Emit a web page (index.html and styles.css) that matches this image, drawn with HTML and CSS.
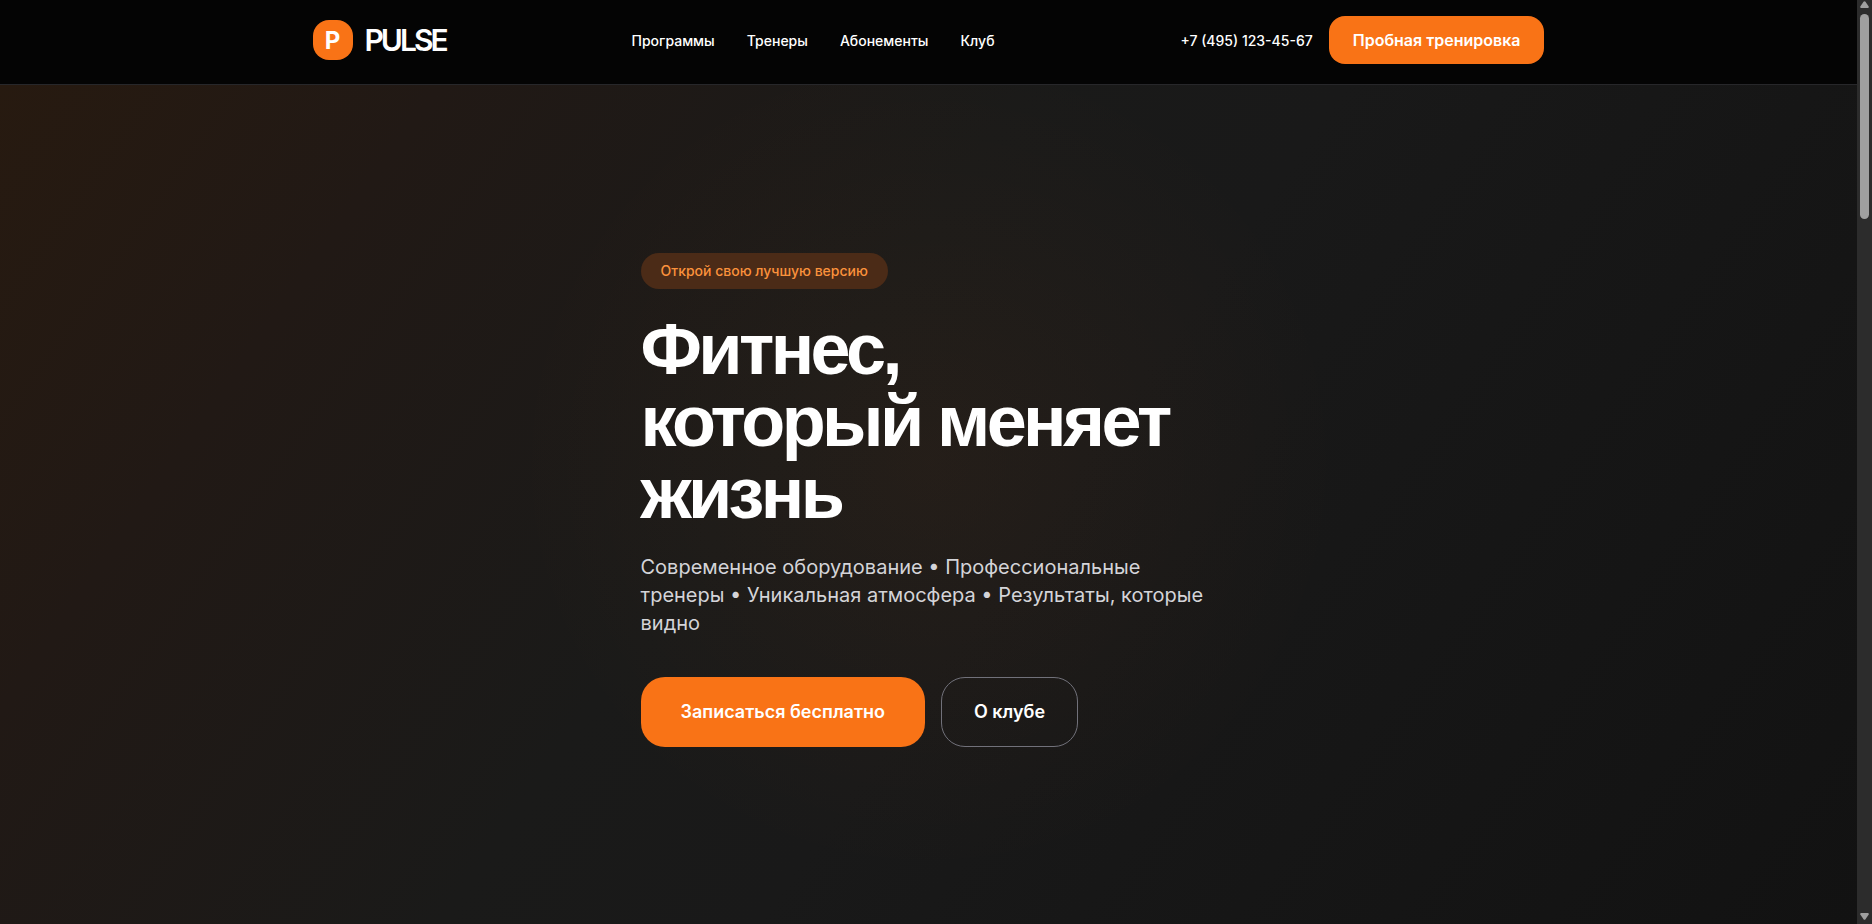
FILE: index.html
```html
<!DOCTYPE html>
<html lang="ru">
<head>
    <meta charset="UTF-8">
    <meta name="viewport" content="width=device-width, initial-scale=1.0">
    <title>PULSE</title>
    <link rel="stylesheet" href="styles.css">
</head>
<body>
    <div class="page">
        <header class="header">
            <div class="container">
                <a href="#" class="logo">
                    <span class="logo-icon">P</span>
                    <span class="logo-text">PULSE</span>
                </a>
                <nav class="nav">
                    <a href="#programs">Программы</a>
                    <a href="#trainers">Тренеры</a>
                    <a href="#prices">Абонементы</a>
                    <a href="#club">Клуб</a>
                </nav>
                <div class="contacts">
                    <a href="tel:+74951234567" class="phone">+7 (495) 123-45-67</a>
                    <button type="button" class="btn-trial">Пробная тренировка</button>
                </div>
            </div>
        </header>

        <main class="hero">
            <div class="hero-content">
                <span class="badge">Открой свою лучшую версию</span>
                <h1>Фитнес,<br>который меняет<br>жизнь</h1>
                <p>Современное оборудование • Профессиональные тренеры • Уникальная атмосфера • Результаты, которые видно</p>
                <div class="hero-buttons">
                    <button type="button" class="btn-primary">Записаться бесплатно</button>
                    <button type="button" class="btn-outline">О клубе</button>
                </div>
            </div>
        </main>
    </div>

    <!-- Scrollbar -->
    <div class="scrollbar" aria-hidden="true">
        <svg width="9" height="7" viewBox="0 0 9 7"><path d="M3.5 0.8Q4.5 -0.4 5.5 0.8L8.7 5.4Q9 7 8 7H1Q0 7 0.3 5.4Z"/></svg>
        <div class="track"><div class="thumb"></div></div>
        <svg width="9" height="7" viewBox="0 0 9 7"><path d="M3.5 6.2Q4.5 7.4 5.5 6.2L8.7 1.6Q9 0 8 0H1Q0 0 0.3 1.6Z"/></svg>
    </div>
</body>
</html>
```

FILE: styles.css
```css
* {
    box-sizing: border-box;
}

body {
    font-family: Inter, "Liberation Sans", sans-serif;
    background-color: #09090b;
    color: #FFFFFF;
    margin: 0;
    display: flex;
    height: 100vh;
    overflow: hidden;
}

a {
    color: inherit;
    text-decoration: none;
}

button {
    font-family: inherit;
    color: #FFFFFF;
    border: none;
    cursor: pointer;
}

.page {
    flex: 1;
    display: flex;
    flex-direction: column;
}

.header {
    background-color: #040404;
    border-bottom: 1px solid #27272a;
    padding: 16px 24px 20px;
}

.container {
    max-width: 1232px;
    margin: 0 auto;
    display: flex;
    align-items: center;
    justify-content: space-between;
}

.logo {
    display: flex;
    align-items: center;
    gap: 12px;
}

.logo-icon {
    display: flex;
    align-items: center;
    justify-content: center;
    width: 40px;
    height: 40px;
    border-radius: 16px;
    background-color: #f97316;
    font-size: 24px;
    font-weight: 700;
}

.logo-text {
    font-size: 30px;
    font-weight: 600;
    letter-spacing: -3px;
}

.nav {
    display: flex;
    gap: 32px;
    font-size: 14px;
    font-weight: 500;
}

.contacts {
    display: flex;
    align-items: center;
    gap: 16px;
}

.phone {
    font-size: 14px;
    font-weight: 500;
}

.btn-trial {
    height: 48px;
    padding: 0 24px;
    border-radius: 16px;
    background-color: #f97316;
    font-size: 16px;
    font-weight: 600;
}

.hero {
    flex: 1;
    display: flex;
    align-items: center;
    justify-content: center;
    padding-bottom: 10px;
    background:
        radial-gradient(circle at 50% 45%, rgba(249, 115, 22, 0.05), transparent 40%),
        linear-gradient(125deg, #271a10 0%, #211915 18%, #1a1a19 42%, #191919 55%, #121212 100%);
}

.hero-content {
    width: 576px;
}

.badge {
    display: inline-block;
    padding: 8px 20px;
    border-radius: 18px;
    background-color: #4b2b17;
    color: #fb923c;
    font-size: 14px;
    line-height: 20px;
    font-weight: 500;
}

h1 {
    margin: 24px 0;
    font-family: "Liberation Sans", Arial, sans-serif;
    font-size: 72px;
    line-height: 1;
    font-weight: 700;
    letter-spacing: -0.05em;
}

.hero p {
    margin: 0 0 40px;
    color: #d4d4d8;
    font-size: 20px;
    line-height: 28px;
}

.hero-buttons {
    display: flex;
    gap: 16px;
}

.btn-primary,
.btn-outline {
    height: 70px;
    border-radius: 24px;
    font-size: 18px;
    font-weight: 600;
}

.btn-primary {
    padding: 0 40px;
    background-color: #f97316;
}

.btn-outline {
    padding: 0 32px;
    background-color: transparent;
    border: 1px solid #71717a;
}

.scrollbar {
    width: 15px;
    background-color: #2c2c2c;
    display: flex;
    flex-direction: column;
    align-items: center;
    gap: 6px;
    padding: 1px 0 4px;
}

.scrollbar svg {
    fill: #9f9f9f;
}

.track {
    flex: 1;
}

.thumb {
    width: 9px;
    height: 23%;
    border-radius: 5px;
    background-color: #9f9f9f;
}
```
